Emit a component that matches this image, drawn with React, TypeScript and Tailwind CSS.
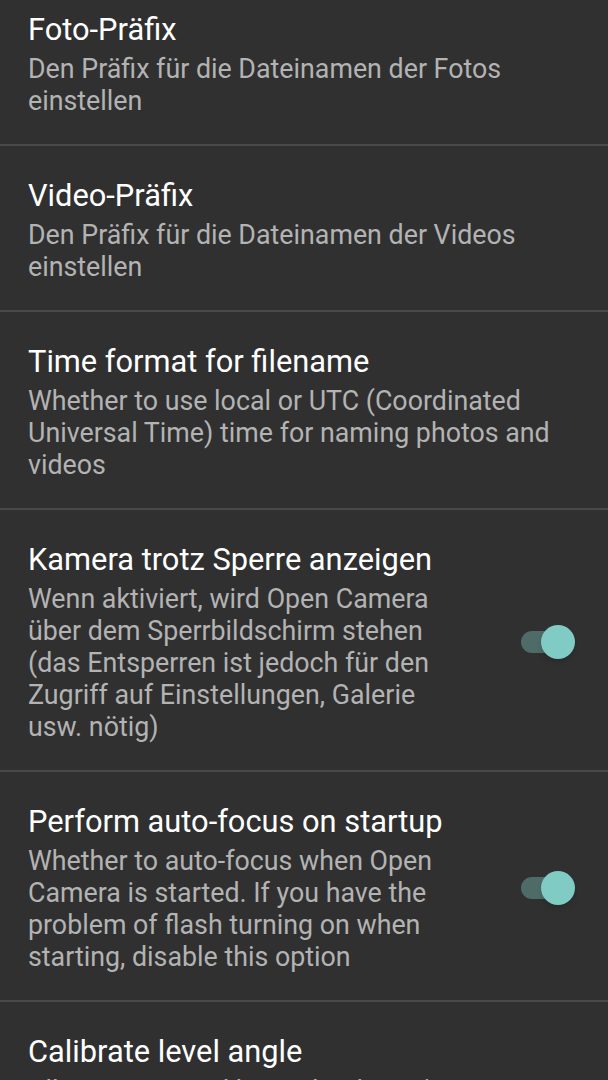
import React from "react";

type Pref = {
  title: string;
  summary: string;
  toggle?: boolean;
};

const prefs: Pref[] = [
  { title: "Foto-Präfix", summary: "Den Präfix für die Dateinamen der Fotos einstellen" },
  { title: "Video-Präfix", summary: "Den Präfix für die Dateinamen der Videos einstellen" },
  {
    title: "Time format for filename",
    summary: "Whether to use local or UTC (Coordinated Universal Time) time for naming photos and videos",
  },
  {
    title: "Kamera trotz Sperre anzeigen",
    summary:
      "Wenn aktiviert, wird Open Camera über dem Sperrbildschirm stehen (das Entsperren ist jedoch für den Zugriff auf Einstellungen, Galerie usw. nötig)",
    toggle: true,
  },
  {
    title: "Perform auto-focus on startup",
    summary:
      "Whether to auto-focus when Open Camera is started. If you have the problem of flash turning on when starting, disable this option",
    toggle: true,
  },
  {
    title: "Calibrate level angle",
    summary: "Allows you to calibrate the device's accelerometer so that the level angle is correct",
  },
];

function Toggle() {
  return (
    <div className="relative w-[54px] h-[34px] flex items-center">
      <div className="w-[48px] h-[22px] rounded-full bg-[#4e6b68]" />
      <div className="absolute right-0 top-0 w-[34px] h-[34px] rounded-full bg-[#80cbc4] shadow-md" />
    </div>
  );
}

function PrefRow({ pref, last }: { pref: Pref; last: boolean }) {
  return (
    <div>
      <div className="flex items-center pl-[28px] pr-[33px] pt-[31px] pb-[27px]">
        <div className={pref.toggle ? "w-[432px]" : "flex-1"}>
          <div className="text-[30.8px] leading-[38px] text-white">{pref.title}</div>
          <div className="mt-[4px] text-[26.8px] leading-[32px] text-[#b3b3b3]">{pref.summary}</div>
        </div>
        {pref.toggle && (
          <div className="ml-auto">
            <Toggle />
          </div>
        )}
      </div>
      {!last && <div className="h-[2px] bg-[#494949]" />}
    </div>
  );
}

export default function App() {
  return (
    <div
      className="w-[608px] h-[1080px] overflow-hidden bg-[#303030]"
      style={{ fontFamily: "Roboto, 'Noto Sans', sans-serif" }}
    >
      <div className="-mt-[20px]">
        {prefs.map((p, i) => (
          <PrefRow key={p.title} pref={p} last={i === prefs.length - 1} />
        ))}
      </div>
    </div>
  );
}
